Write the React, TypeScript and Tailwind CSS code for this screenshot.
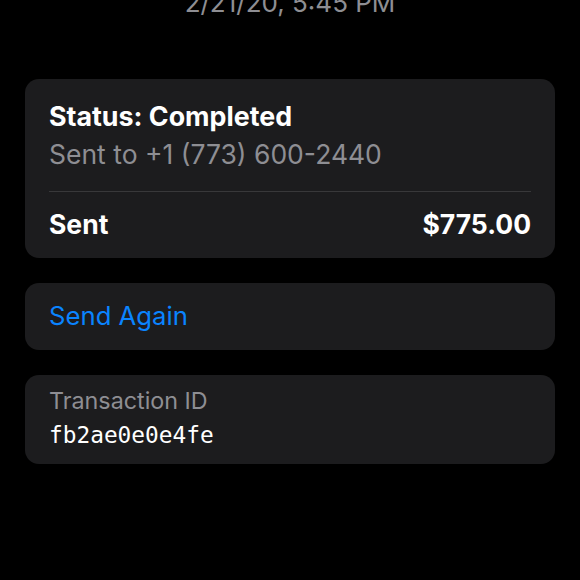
export default function App() {
    return (
        <div className="min-h-[580px] w-[580px] overflow-hidden bg-black font-['Inter',sans-serif] antialiased">
            <div className="-mt-[12px] text-center text-[26px] leading-[30px] text-[#8e8e93]">
                2/21/20, 5:45 PM
            </div>
            <div className="mt-[61px] flex flex-col gap-[25px] px-[25px]">
                <div className="rounded-[14px] bg-[#1c1c1e] pt-[18px] pl-[24px]">
                    <div className="text-[26.8px] leading-[38px] font-bold text-white">
                        Status: Completed
                    </div>
                    <div className="text-[26.5px] leading-[38px] text-[#8e8e93]">
                        Sent to +1 (773) 600-2440
                    </div>
                    <div className="mt-[18px] mr-[24px] h-px bg-[#38383a]" />
                    <div className="flex h-[66px] items-center justify-between pr-[24px] text-[26.5px] font-bold text-white">
                        <span>Sent</span>
                        <span>$775.00</span>
                    </div>
                </div>
                <div className="flex h-[67px] items-center rounded-[14px] bg-[#1c1c1e] px-[24px] text-[25.7px] text-[#0a84ff]">
                    Send Again
                </div>
                <div className="rounded-[14px] bg-[#1c1c1e] px-[24px] pt-[9px] pb-[12px]">
                    <div className="text-[23.3px] leading-[34px] text-[#8e8e93]">
                        Transaction ID
                    </div>
                    <div className="font-['DejaVu_Sans_Mono',monospace] text-[22.8px] leading-[34px] text-white">
                        fb2ae0e0e4fe
                    </div>
                </div>
            </div>
        </div>
    );
}
